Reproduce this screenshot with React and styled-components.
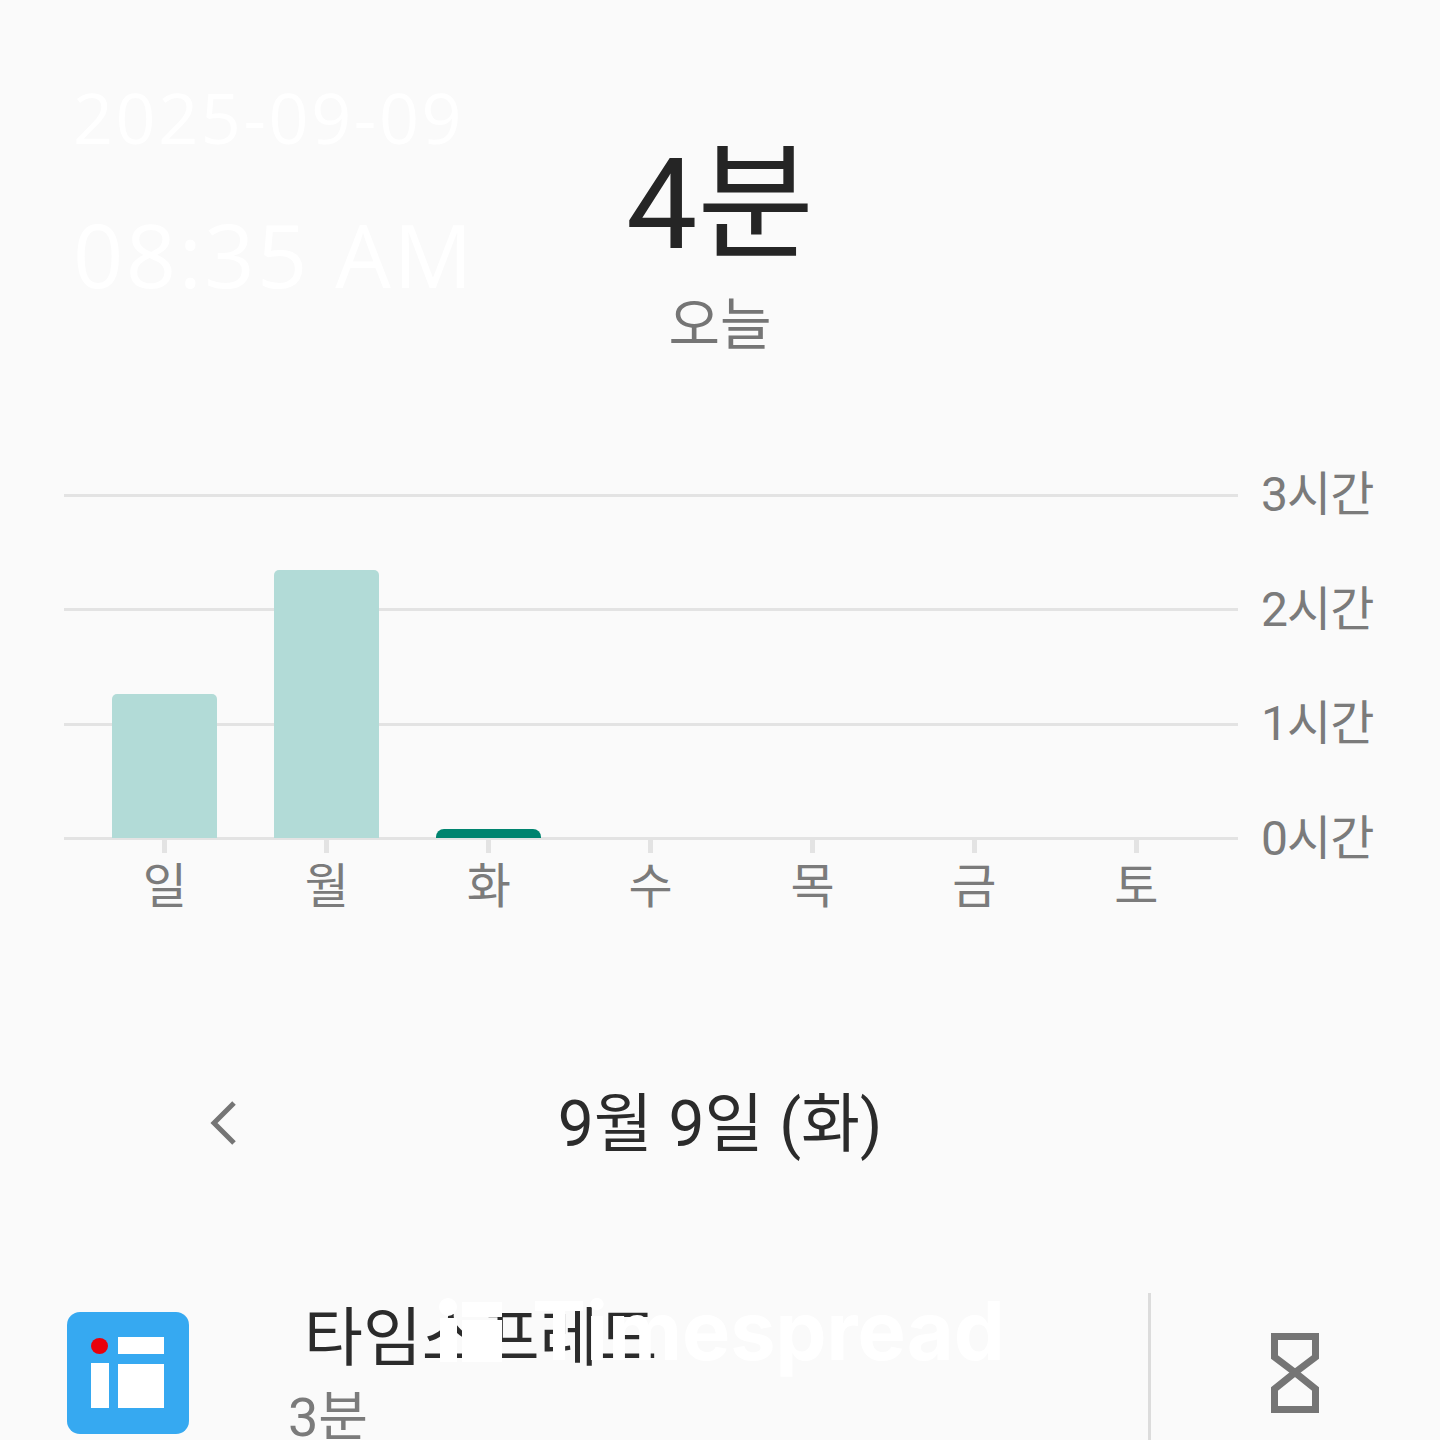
import React from "react";
import styled, { createGlobalStyle } from "styled-components";

const GlobalStyle = createGlobalStyle`
  html, body {
    margin: 0;
    padding: 0;
    background: #fafafa;
  }
`;

const FONT = `Roboto, "Noto Sans CJK KR", sans-serif`;

const Page = styled.div`
  position: relative;
  width: 1440px;
  height: 1440px;
  overflow: hidden;
  background: #fafafa;
  font-family: ${FONT};
`;

const Stamp = styled.div`
  position: absolute;
  left: 73px;
  top: ${(p) => p.$top}px;
  color: #fff;
  font-family: "Open Sans", sans-serif;
  font-weight: 400;
  font-size: ${(p) => p.$size}px;
  letter-spacing: ${(p) => p.$spacing}px;
  line-height: 1;
  white-space: nowrap;
`;

const Summary = styled.header`
  display: flex;
  flex-direction: column;
  align-items: center;
  padding-top: 133px;
  height: 464px;
  box-sizing: border-box;
`;

const Total = styled.div`
  color: #252525;
  font-size: 127px;
  line-height: 144px;
`;

const Period = styled.div`
  color: #757575;
  font-size: 56px;
  line-height: 72px;
  margin-top: 12px;
`;

const Chart = styled.section`
  display: flex;
  height: 480px;
  padding-left: 64px;
`;

const PlotColumn = styled.div`
  width: 1174px;
`;

const Plot = styled.div`
  position: relative;
  height: 376px;
  display: flex;
  flex-direction: column;
  justify-content: space-between;
  padding-top: 30px;
  box-sizing: border-box;
`;

const GridLine = styled.div`
  height: 3px;
  background: #e3e3e3;
`;

const Bars = styled.div`
  position: absolute;
  inset: 0 0 2px 20px;
  display: grid;
  grid-template-columns: repeat(7, 161.9px);
  align-items: end;
`;

const BarSlot = styled.div`
  display: flex;
  justify-content: center;
`;

const Bar = styled.div`
  width: 105px;
  height: ${(p) => p.$height}px;
  background: ${(p) => (p.$active ? "#00846f" : "#b2dbd7")};
  border-radius: ${(p) => (p.$active ? "8px 8px 0 0" : "5px 5px 0 0")};
`;

const Days = styled.div`
  display: grid;
  grid-template-columns: repeat(7, 161.9px);
  padding-left: 20px;
`;

const Day = styled.div`
  display: flex;
  flex-direction: column;
  align-items: center;
  color: #7b7b7b;
  font-size: 48px;
  line-height: 56px;
`;

const Tick = styled.div`
  width: 5px;
  height: 13px;
  margin-bottom: 6px;
  background: #e3e3e3;
`;

const Scale = styled.div`
  display: flex;
  flex-direction: column;
  justify-content: space-between;
  height: 403px;
  padding: 3px 0 0 23px;
  box-sizing: border-box;
`;

const ScaleLabel = styled.div`
  color: #7b7b7b;
  font-size: 48px;
  line-height: 56px;
  letter-spacing: -1px;
`;

const DateNav = styled.nav`
  display: flex;
  align-items: center;
  justify-content: center;
  position: relative;
  height: 92px;
  margin-top: 135px;
`;

const BackButton = styled.button`
  position: absolute;
  left: 209px;
  top: 21px;
  display: flex;
  padding: 0;
  border: 0;
  background: none;
`;

const DateLabel = styled.div`
  color: #2b2b2b;
  font-size: 64px;
  line-height: 72px;
`;

const AppRow = styled.div`
  display: flex;
  align-items: flex-start;
  margin-top: 122px;
  padding-left: 66px;
`;

const AppIcon = styled.svg`
  flex: none;
  width: 124px;
  height: 124px;
  margin-top: 18px;
`;

const AppText = styled.div`
  width: 860px;
  margin-left: 98px;
`;

const AppName = styled.div`
  padding-left: 16px;
  color: #2b2b2b;
  font-size: 64px;
  line-height: 92px;
`;

const AppTime = styled.div`
  margin-top: 1px;
  color: #7b7b7b;
  font-size: 54px;
  line-height: 64px;
`;

const Divider = styled.div`
  flex: none;
  width: 3px;
  height: 150px;
  background: #dcdcdc;
`;

const TimerIcon = styled.svg`
  flex: none;
  width: 48px;
  height: 80px;
  margin: 40px 0 0 120px;
`;

const Watermark = styled.div`
  position: absolute;
  left: 438px;
  top: 1283px;
  display: flex;
  align-items: center;
  gap: 28px;
  color: #fff;
  font-family: Inter, sans-serif;
  font-weight: 700;
  font-size: 81px;
  line-height: 96px;
`;

const WatermarkLogo = styled.svg`
  flex: none;
  width: 66px;
  height: 66px;
`;

const days = ["일", "월", "화", "수", "목", "금", "토"];
const hours = [144, 268, 9, 0, 0, 0, 0];
const scale = ["3시간", "2시간", "1시간", "0시간"];

export default function App() {
  return (
    <Page>
      <GlobalStyle />
      <Summary>
        <Total>4분</Total>
        <Period>오늘</Period>
      </Summary>

      <Chart>
        <PlotColumn>
          <Plot>
            {scale.map((s) => (
              <GridLine key={s} />
            ))}
            <Bars>
              {hours.map((h, i) => (
                <BarSlot key={days[i]}>
                  {h > 0 && <Bar $height={h} $active={i === 2} />}
                </BarSlot>
              ))}
            </Bars>
          </Plot>
          <Days>
            {days.map((d) => (
              <Day key={d}>
                <Tick />
                {d}
              </Day>
            ))}
          </Days>
        </PlotColumn>
        <Scale>
          {scale.map((s) => (
            <ScaleLabel key={s}>{s}</ScaleLabel>
          ))}
        </Scale>
      </Chart>

      <DateNav>
        <BackButton>
          <svg width="30" height="46" viewBox="0 0 30 46" fill="none">
            <path d="M25 3 L5 23 L25 43" stroke="#757575" strokeWidth="5" />
          </svg>
        </BackButton>
        <DateLabel>9월 9일 (화)</DateLabel>
      </DateNav>

      <AppRow>
        <AppIcon viewBox="0 0 124 124">
          <rect x="1" y="1" width="122" height="122" rx="13" fill="#36a9f1" />
          <rect x="25" y="52" width="18" height="45" fill="#fff" />
          <rect x="52" y="26" width="46" height="17" fill="#fff" />
          <rect x="52" y="53" width="46" height="44" fill="#fff" />
          <ellipse cx="33.5" cy="35" rx="8.5" ry="8" fill="#e8000c" />
        </AppIcon>
        <AppText>
          <AppName>타임스프레드</AppName>
          <AppTime>3분</AppTime>
        </AppText>
        <Divider />
        <TimerIcon viewBox="0 0 48 80">
          <path
            d="M3.5 3.5 H44.5 V24 L24 39.5 L44.5 56 V76.5 H3.5 V56 L24 39.5 L3.5 24 Z"
            fill="none"
            stroke="#757575"
            strokeWidth="7"
          />
        </TimerIcon>
      </AppRow>

      <Stamp $top={82} $size={70} $spacing={2.6}>2025-09-09</Stamp>
      <Stamp $top={210} $size={88} $spacing={2.5}>08:35 AM</Stamp>
      <Watermark>
        <WatermarkLogo viewBox="0 0 66 66">
          <circle cx="10" cy="9" r="9" fill="#fff" />
          <rect x="2" y="20" width="17" height="44" fill="#fff" />
          <rect x="24" y="4" width="40" height="15" fill="#fff" />
          <rect x="24" y="22" width="40" height="42" fill="#fff" />
        </WatermarkLogo>
        Timespread
      </Watermark>
    </Page>
  );
}
